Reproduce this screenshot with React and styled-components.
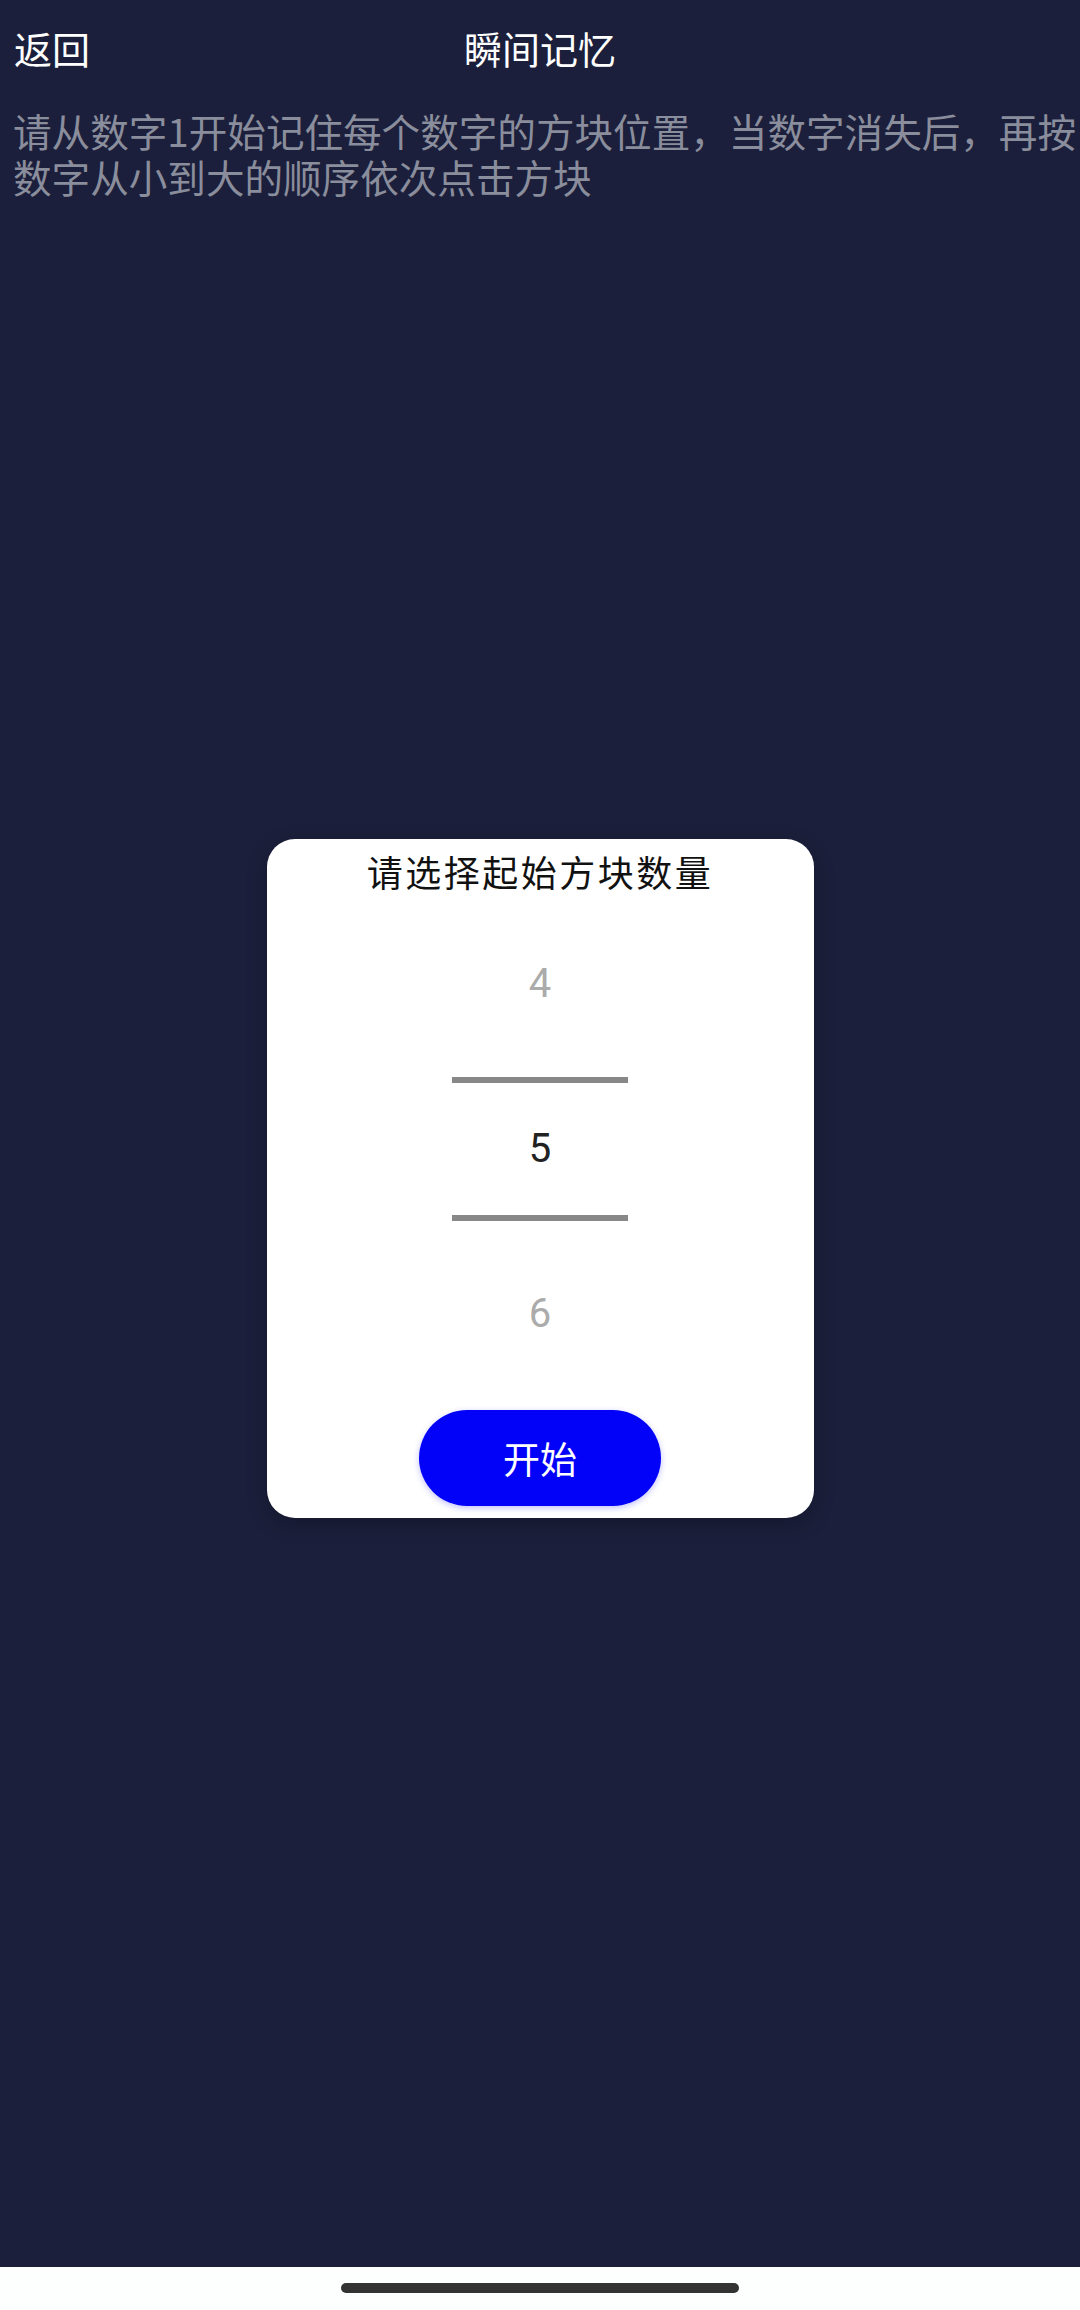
import React, { useState } from 'react';
import styled, { createGlobalStyle } from 'styled-components';

const GlobalStyle = createGlobalStyle`
  html, body {
    margin: 0;
    padding: 0;
    background: #1b1f3b;
  }
  * {
    box-sizing: border-box;
  }
`;

const CJK = `"Noto Sans CJK SC", "Noto Sans", sans-serif`;

const Page = styled.div`
  width: 1080px;
  height: 2310px;
  display: flex;
  flex-direction: column;
  background: #1b1f3b;
  font-family: ${CJK};
  overflow: hidden;
`;

const Header = styled.div`
  height: 96px;
  display: grid;
  grid-template-columns: 1fr auto 1fr;
  align-items: center;
  padding: 0 14px;
  color: #ffffff;
  font-size: 38px;
  line-height: 50px;
`;

const BackButton = styled.div`
  justify-self: start;
  cursor: pointer;
`;

const Title = styled.div`
  justify-self: center;
`;

const Desc = styled.p`
  margin: 11px 0 0;
  padding-left: 13px;
  font-size: 38.6px;
  line-height: 46px;
  color: #8a8d9b;
`;

// 모달 자리
const Body = styled.div`
  flex: 1;
  display: flex;
  justify-content: center;
  align-items: flex-start;
  padding-top: 640px;
`;

const Dialog = styled.div`
  width: 547px;
  height: 679px;
  background: #ffffff;
  border-radius: 28px;
  box-shadow: 0 6px 20px rgba(0, 0, 0, 0.25);
  display: flex;
  flex-direction: column;
  align-items: center;
  padding-top: 7px;
`;

const DialogTitle = styled.div`
  font-size: 36px;
  letter-spacing: 2.5px;
  line-height: 50px;
  color: #111111;
`;

const Picker = styled.div`
  margin-top: 5px;
  display: flex;
  flex-direction: column;
  align-items: center;
  width: 100%;
`;

const Item = styled.div`
  height: 165px;
  width: 100%;
  display: flex;
  align-items: center;
  justify-content: center;
  font-family: Roboto, "Noto Sans", sans-serif;
  font-size: 40px;
  color: ${(p) => (p.active ? '#222222' : '#ababab')};
  cursor: pointer;
`;

const SelectedBand = styled.div`
  width: 176px;
  height: 144px;
  border-top: 6px solid #888888;
  border-bottom: 6px solid #888888;
  display: flex;
  align-items: center;
  justify-content: center;
`;

const StartButton = styled.button`
  margin-top: 14px;
  width: 242px;
  height: 96px;
  border: none;
  border-radius: 48px;
  background: #0202f8;
  color: #ffffff;
  font-family: ${CJK};
  font-size: 37px;
  box-shadow: 0 2px 6px rgba(0, 0, 255, 0.25);
  cursor: pointer;
`;

const NavBar = styled.div`
  height: 43px;
  background: #fdfefe;
  display: flex;
  justify-content: center;
  padding-top: 16px;
`;

const NavPill = styled.div`
  width: 398px;
  height: 10px;
  border-radius: 5px;
  background: #333333;
`;

const App = () => {
  const [count, setCount] = useState(5);

  return (
    <Page>
      <GlobalStyle />
      <Header>
        <BackButton>返回</BackButton>
        <Title>瞬间记忆</Title>
        <div />
      </Header>
      <Desc>请从数字1开始记住每个数字的方块位置，当数字消失后，再按数字从小到大的顺序依次点击方块</Desc>

      <Body>
        <Dialog>
          <DialogTitle>请选择起始方块数量</DialogTitle>
          <Picker>
            <Item onClick={() => setCount(count - 1)}>{count - 1}</Item>
            <Item active>
              <SelectedBand>{count}</SelectedBand>
            </Item>
            <Item onClick={() => setCount(count + 1)}>{count + 1}</Item>
          </Picker>
          <StartButton>开始</StartButton>
        </Dialog>
      </Body>

      <NavBar>
        <NavPill />
      </NavBar>
    </Page>
  );
};

export default App;
